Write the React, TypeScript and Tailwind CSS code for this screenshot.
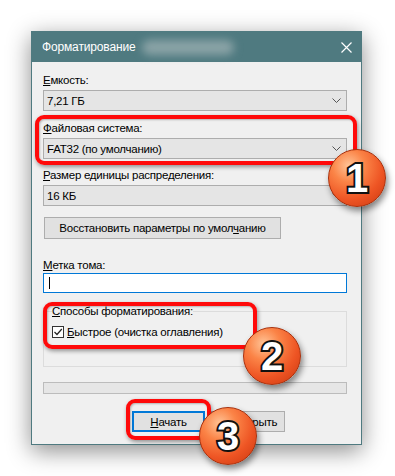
import React from "react";

const ui = { fontFamily: '"Liberation Sans", Arial, sans-serif' };

function Combo({ value }: { value: string }) {
  return (
    <div className="flex h-[21px] items-center justify-between border border-[#adadad] bg-[#e5e5e5] pl-[3px] pr-[5px] text-black">
      <span>{value}</span>
      <svg width="9" height="5" viewBox="0 0 9 5" fill="none">
        <path d="M0.5 0.5 L4.5 4.5 L8.5 0.5" stroke="#555" strokeWidth="1" />
      </svg>
    </div>
  );
}

function Badge({ n, x, y }: { n: string; x: number; y: number }) {
  return (
    <div
      className="absolute flex h-[58px] w-[58px] items-center justify-center rounded-full border border-[#a8300c] bg-[radial-gradient(circle_at_35%_28%,#ffc497_0%,#fb8447_30%,#ee5524_62%,#c9360f_100%)] shadow-[2px_4px_6px_rgba(0,0,0,0.45)]"
      style={{ left: x - 29, top: y - 29 }}
    >
      <span
        className="text-[40px] font-bold leading-none tracking-normal text-white [paint-order:stroke] [-webkit-text-stroke:4px_#111]"
        style={{ fontFamily: '"Liberation Sans", Arial, sans-serif' }}
      >
        {n}
      </span>
    </div>
  );
}

function RedBox({ l, t, w, h }: { l: number; t: number; w: number; h: number }) {
  return (
    <div
      className="absolute rounded-[9px] border-[4px] border-[#ff0a0a] shadow-[1px_2px_4px_rgba(0,0,0,0.4),inset_1px_1px_2px_rgba(0,0,0,0.25)]"
      style={{ left: l, top: t, width: w, height: h }}
    />
  );
}

export default function App() {
  return (
    <div className="relative h-[476px] w-[395px] overflow-hidden bg-white" style={ui}>
      <div className="pl-[31px] pt-[31px]">
        <div className="h-[414px] w-[331px] border border-[#4f7a80] bg-[#f0f0f0] shadow-[0_6px_22px_rgba(0,0,0,0.45)]">
          {/* title bar */}
          <div className="flex h-[30px] items-center justify-between bg-[#4f7a80] pl-[10px] pr-[9px] text-white">
            <div className="flex items-center text-[12px] tracking-[-0.15px]">
              <span>Форматирование</span>
              <span className="ml-[6px] inline-block h-[15px] w-[92px] rounded-full bg-[#8aa3a6] blur-[4px]" />
            </div>
            <svg width="11" height="11" viewBox="0 0 11 11">
              <path d="M0.5 0.5 L10.5 10.5 M10.5 0.5 L0.5 10.5" stroke="#fff" strokeWidth="1.2" />
            </svg>
          </div>

          {/* body */}
          <div className="pl-[11px] pr-[14px] pt-[10px] text-[11.5px] leading-[16px] tracking-[-0.25px] text-black">
            <div className="h-4">
              <u>Е</u>мкость:
            </div>
            <div className="mt-[2px]">
              <Combo value="7,21 ГБ" />
            </div>

            <div className="mt-[9px] h-4">
              <u>Ф</u>айловая система:
            </div>
            <div className="mt-[2px]">
              <Combo value="FAT32 (по умолчанию)" />
            </div>

            <div className="mt-[8px] h-4">
              <u>Р</u>азмер единицы распределения:
            </div>
            <div className="mt-[2px]">
              <Combo value="16 КБ" />
            </div>

            <button className="mt-[11px] ml-px flex h-[22px] w-[237px] items-center justify-center border border-[#adadad] bg-[#e1e1e1]">
              <span>
                Восстановить параметры по умол<u>ч</u>анию
              </span>
            </button>

            <div className="mt-[18px] h-4">
              <u>М</u>етка тома:
            </div>
            <div className="flex h-[20px] items-center border border-[#0078d7] bg-white pl-[5px]">
              <div className="h-[12px] w-px bg-black" />
            </div>

            <fieldset className="mt-[10px] border border-[#dcdcdc] px-2 pb-[26px]">
              <legend className="leading-[16px]">
                <u>С</u>пособы форматирования:
              </legend>
              <div className="mt-[5px] flex h-4 items-center gap-[3px]">
                <svg width="12" height="12" viewBox="0 0 12 12">
                  <rect x="0.5" y="0.5" width="11" height="11" fill="#fff" stroke="#333" />
                  <path d="M2.5 6 L5 8.5 L9.8 3" fill="none" stroke="#222" strokeWidth="1.2" />
                </svg>
                <span>
                  <u>Б</u>ыстрое (очистка оглавления)
                </span>
              </div>
            </fieldset>

            <div className="mt-[15px] h-[12px] border border-[#bcbcbc] bg-[#e6e6e6]" />

            <div className="mt-[17px] flex gap-[6px] pl-[89px]">
              <button className="flex h-[21px] w-[73px] items-center justify-center border-2 border-[#0078d7] bg-[#e1e1e1]">
                <span>
                  <u>Н</u>ачать
                </span>
              </button>
              <button className="flex h-[21px] w-[74px] items-center justify-center border border-[#adadad] bg-[#e1e1e1] pl-[16px]">
                Закрыть
              </button>
            </div>
          </div>
        </div>
      </div>

      {/* annotations */}
      <RedBox l={35} t={115} w={322} h={50} />
      <RedBox l={43} t={302} w={214} h={47} />
      <RedBox l={126} t={399} w={85} h={41} />
      <Badge n="1" x={357} y={178} />
      <Badge n="2" x={272} y={356} />
      <Badge n="3" x={228} y={436} />
    </div>
  );
}
